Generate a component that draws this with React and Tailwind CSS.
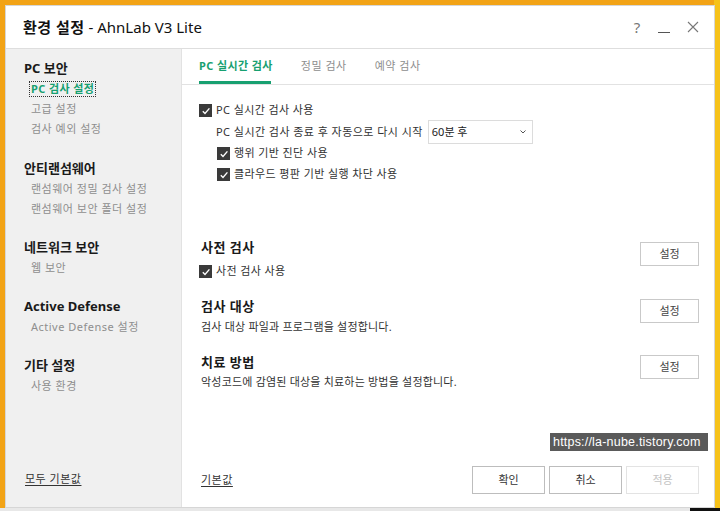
const font = { fontFamily: "'Noto Sans', 'Noto Sans CJK KR', sans-serif" };

const Check = ({ className = '' }) => (
  <span className={`flex h-[13px] w-[13px] items-center justify-center bg-[#3a3a3a] ${className}`}>
    <svg width="10" height="10" viewBox="0 0 10 10" fill="none">
      <path d="M1.8 5.2 L4 7.4 L8.4 2.4" stroke="#ffffff" strokeWidth="1.4" />
    </svg>
  </span>
);

const CheckRow = ({ label, indent = false }) => (
  <div className={`flex h-[21px] items-center ${indent ? 'pl-[18px]' : ''}`}>
    <Check />
    <span className="ml-[4px] text-[11px] tracking-[0.4px] text-[#333]">{label}</span>
  </div>
);

const SetButton = ({ top }) => (
  <button
    className={`h-[24px] w-[59px] border border-[#c9c9c9] bg-white text-[11px] text-[#444] ${top}`}
  >
    설정
  </button>
);

const sideGroups = [
  { title: 'PC 보안', items: ['PC 검사 설정', '고급 설정', '검사 예외 설정'] },
  { title: '안티랜섬웨어', items: ['랜섬웨어 정밀 검사 설정', '랜섬웨어 보안 폴더 설정'] },
  { title: '네트워크 보안', items: ['웹 보안'] },
  { title: 'Active Defense', items: ['Active Defense 설정'] },
  { title: '기타 설정', items: ['사용 환경'] },
];

export default function App() {
  return (
    <div
      style={font}
      className="relative h-[511px] w-[720px] overflow-hidden bg-[#f2a316]"
    >
      {/* right yellow edge */}
      <div className="absolute right-0 top-0 h-full w-[6px] bg-[#f6c21a]" />
      {/* bottom strip */}
      <div className="absolute bottom-0 left-0 flex h-[3px] w-full bg-[#e8e8e8]">
        <div className="ml-auto h-full w-[30px] bg-[#111]" />
      </div>

      <div className="absolute left-[5px] top-[5px] flex h-[503px] w-[710px] flex-col border border-[#d6d6d6] bg-white">
        {/* title bar */}
        <div className="flex h-[43px] items-center border-b border-[#dedede] pl-[17px] pr-[14px]">
          <span className="text-[15px] text-[#111]">
            <span className="font-bold tracking-[0.5px]">환경 설정</span> - AhnLab V3 Lite
          </span>
          <div className="ml-auto flex items-center gap-[14px] text-[#777]">
            <span className="w-[14px] text-center text-[15px]">?</span>
            <span className="flex h-[14px] w-[14px] items-end">
              <span className="mb-[1px] h-[1px] w-[12px] bg-[#555]" />
            </span>
            <svg width="14" height="14" viewBox="0 0 14 14">
              <path d="M2 2 L12 12 M12 2 L2 12" stroke="#777" strokeWidth="1.1" />
            </svg>
          </div>
        </div>

        <div className="flex flex-1">
          {/* sidebar */}
          <div className="flex w-[176px] flex-col border-r border-[#e2e2e2] bg-[#f0f0f0] pb-[14px] pl-[18px] pt-[10px]">
            {sideGroups.map((g, gi) => (
              <div key={g.title} className={gi === 0 ? '' : gi === 1 ? 'mt-[20px]' : 'mt-[19px]'}>
                <div className="flex h-[20px] items-center text-[13px] font-bold text-[#1a1a1a]">
                  {g.title}
                </div>
                {g.items.map((it, ii) =>
                  gi === 0 && ii === 0 ? (
                    <div key={it} className="flex h-[20px] items-center pl-[5px]">
                      <span className="border border-dotted border-[#333] px-[1px] text-[11px] font-bold leading-[14px] tracking-[0.4px] text-[#17a070]">
                        {it}
                      </span>
                    </div>
                  ) : (
                    <div
                      key={it}
                      className="flex h-[20px] items-center pl-[7px] text-[11px] tracking-[0.5px] text-[#8e8e8e]"
                    >
                      {it}
                    </div>
                  )
                )}
              </div>
            ))}
            <div className="mt-auto flex h-[28px] items-center pl-[1px]">
              <span className="text-[11px] tracking-[0.5px] text-[#333] underline underline-offset-2">모두 기본값</span>
            </div>
          </div>

          {/* content */}
          <div className="flex flex-1 flex-col">
            <div className="flex h-[36px] items-end gap-[28px] border-b border-[#e2e2e2] pl-[17px]">
              <div className="flex h-full flex-col justify-between">
                <span className="pt-[9px] text-[11px] font-bold tracking-[0.4px] text-[#17a070]">PC 실시간 검사</span>
                <span className="h-[3px] w-[72px] bg-[#17a070]" />
              </div>
              <span className="mb-[10px] text-[11px] tracking-[0.5px] text-[#8e8e8e]">정밀 검사</span>
              <span className="mb-[10px] text-[11px] tracking-[0.5px] text-[#8e8e8e]">예약 검사</span>
            </div>

            <div className="flex flex-1 flex-col pl-[17px] pr-[15px] pt-[15px]">
              <CheckRow label="PC 실시간 검사 사용" />
              <div className="flex h-[22px] items-center pl-[17px]">
                <span className="text-[11px] tracking-[0.45px] text-[#333]">PC 실시간 검사 종료 후 자동으로 다시 시작</span>
                <div className="ml-[5px] flex h-[24px] w-[105px] items-center border border-[#dcdcdc] bg-white pl-[3px] pr-[6px]">
                  <span className="text-[11px] text-[#222]">60분 후</span>
                  <svg className="ml-auto" width="6" height="4" viewBox="0 0 6 4">
                    <path d="M0.5 0.5 L3 3 L5.5 0.5" stroke="#555" strokeWidth="1" fill="none" />
                  </svg>
                </div>
              </div>
              <CheckRow label="행위 기반 진단 사용" indent />
              <CheckRow label="클라우드 평판 기반 실행 차단 사용" indent />

              <div className="mt-[53px] flex">
                <div className="flex flex-col">
                  <div className="flex h-[20px] items-center pl-[2px] text-[13px] font-bold tracking-[0.5px] text-[#1a1a1a]">사전 검사</div>
                  <div className="mt-[3px]">
                    <CheckRow label="사전 검사 사용" />
                  </div>
                </div>
                <div className="ml-auto">
                  <SetButton top="mt-[4px]" />
                </div>
              </div>

              <div className="mt-[15px] flex">
                <div className="flex flex-col">
                  <div className="flex h-[20px] items-center pl-[2px] text-[13px] font-bold tracking-[0.5px] text-[#1a1a1a]">검사 대상</div>
                  <div className="flex h-[20px] items-center pl-[2px] text-[11px] tracking-[0.2px] text-[#333]">
                    검사 대상 파일과 프로그램을 설정합니다.
                  </div>
                </div>
                <div className="ml-auto">
                  <SetButton top="mt-[2px]" />
                </div>
              </div>

              <div className="mt-[16px] flex">
                <div className="flex flex-col">
                  <div className="flex h-[20px] items-center pl-[2px] text-[13px] font-bold tracking-[0.5px] text-[#1a1a1a]">치료 방법</div>
                  <div className="flex h-[19px] items-center pl-[2px] text-[11px] tracking-[0.2px] text-[#333]">
                    악성코드에 감염된 대상을 치료하는 방법을 설정합니다.
                  </div>
                </div>
                <div className="ml-auto">
                  <SetButton top="mt-[2px]" />
                </div>
              </div>

              <div className="mt-auto flex items-center pb-[13px]">
                <span className="pl-[2px] text-[11px] tracking-[0.5px] text-[#333] underline underline-offset-2">기본값</span>
                <div className="ml-auto flex gap-[4px]">
                  <button className="h-[28px] w-[73px] border border-[#bdbdbd] bg-white text-[11px] text-[#333]">
                    확인
                  </button>
                  <button className="h-[28px] w-[73px] border border-[#bdbdbd] bg-white text-[11px] text-[#333]">
                    취소
                  </button>
                  <button className="h-[28px] w-[73px] border border-[#e3e3e3] bg-white text-[11px] text-[#c4c4c4]">
                    적용
                  </button>
                </div>
              </div>
            </div>
          </div>
        </div>
      </div>

      {/* watermark */}
      <div
        style={{ fontFamily: "'Liberation Sans', Arial, sans-serif" }}
        className="absolute left-[550px] top-[433px] flex h-[18px] w-[158px] items-center bg-[#5a5a5a] pl-[3px] text-[12.5px] tracking-[0.2px] text-white"
      >
        https://la-nube.tistory.com
      </div>
    </div>
  );
}
